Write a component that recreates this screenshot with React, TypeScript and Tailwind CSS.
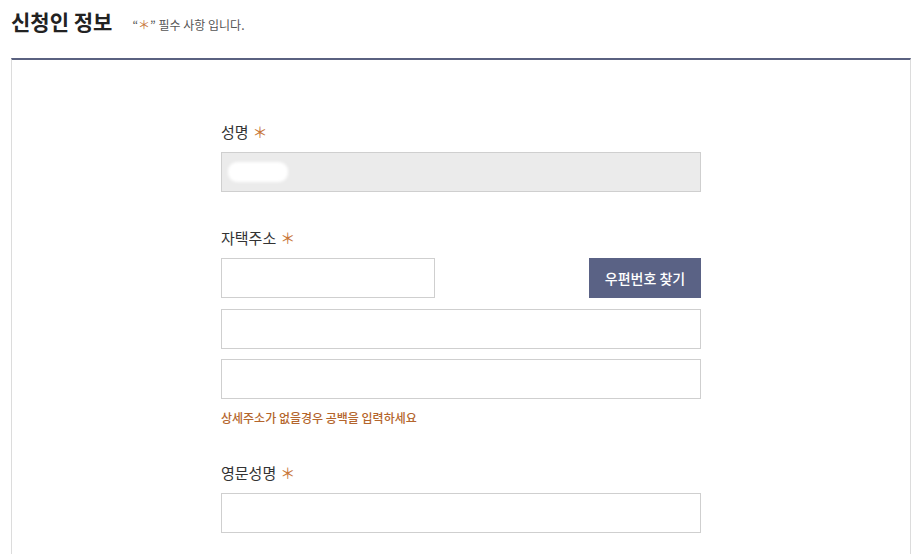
const font = { fontFamily: '"Noto Sans CJK KR", "Noto Sans", sans-serif' };

function Star() {
  return <span className="ml-[4px] text-[#c8773a]">＊</span>;
}

function FieldLabel({ children }: { children: React.ReactNode }) {
  return (
    <div className="mb-[10px] flex h-[20px] items-center text-[15px] leading-[20px] text-[#333]">
      {children}
      <Star />
    </div>
  );
}

function TextBox({ className = '' }: { className?: string }) {
  return <input type="text" className={`block h-[40px] w-full border border-[#cfcfcf] bg-white px-2 outline-none ${className}`} />;
}

export default function App() {
  return (
    <div className="h-[554px] w-[918px] overflow-hidden bg-white" style={font}>
      <div className="flex h-[58px] items-baseline pl-[11px] pt-[7px]">
        <h2 className="text-[21px] font-bold leading-[29px] text-[#222]">신청인 정보</h2>
        <p className="ml-[20px] text-[12px] text-[#555]">
          “<span className="text-[#c8773a]">＊</span>” 필수 사항 입니다.
        </p>
      </div>

      <div className="ml-[11px] h-[520px] w-[900px] border-x border-t-2 border-x-[#dcdcdc] border-t-[#5a6180]">
        <div className="ml-[209px] w-[480px] pt-[62px]">
          <FieldLabel>성명</FieldLabel>
          <div className="flex h-[40px] items-center border border-[#cfcfcf] bg-[#ebebeb] pl-[6px]">
            <span className="h-[20px] w-[60px] rounded-[9px] bg-white blur-[1.5px]" />
          </div>

          <div className="mt-[36px]">
            <FieldLabel>자택주소</FieldLabel>
            <div className="flex items-start justify-between">
              <TextBox className="!w-[214px]" />
              <button className="h-[40px] w-[112px] bg-[#5a6285] text-[14px] font-medium text-white">우편번호 찾기</button>
            </div>
            <TextBox className="mt-[11px]" />
            <TextBox className="mt-[10px]" />
            <p className="mt-[10px] text-[12px] font-medium leading-[18px] text-[#b4652c]">상세주소가 없을경우 공백을 입력하세요</p>
          </div>

          <div className="mt-[36px]">
            <FieldLabel>영문성명</FieldLabel>
            <TextBox />
          </div>
        </div>
      </div>
    </div>
  );
}
